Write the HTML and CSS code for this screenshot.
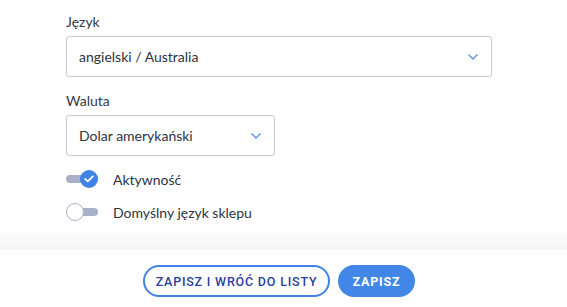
FILE: index.html
```html
<!DOCTYPE html>
<html lang="pl">
<head>
<meta charset="utf-8">
<link rel="stylesheet" href="styles.css">
</head>
<body>
<div class="content">
  <div class="field">
    <label class="label">Język</label>
    <div class="select wide">
      <span>angielski / Australia</span>
      <svg class="chev" width="12" height="8" viewBox="0 0 12 8"><path d="M1.5 1.5 L6 6 L10.5 1.5" fill="none" stroke="#5b8fe8" stroke-width="1.3"/></svg>
    </div>
  </div>
  <div class="field">
    <label class="label">Waluta</label>
    <div class="select narrow">
      <span>Dolar amerykański</span>
      <svg class="chev" width="12" height="8" viewBox="0 0 12 8"><path d="M1.5 1.5 L6 6 L10.5 1.5" fill="none" stroke="#5b8fe8" stroke-width="1.3"/></svg>
    </div>
  </div>
  <div class="toggles">
    <div class="toggle-row">
      <span class="toggle on"><span class="track"></span><span class="knob"><svg width="10" height="8" viewBox="0 0 10 8"><path d="M1.2 4 L3.8 6.4 L8.8 1.4" fill="none" stroke="#fff" stroke-width="1.8" stroke-linecap="round" stroke-linejoin="round"/></svg></span></span>
      <span class="toggle-text">Aktywność</span>
    </div>
    <div class="toggle-row">
      <span class="toggle off"><span class="track"></span><span class="knob"></span></span>
      <span class="toggle-text">Domyślny język sklepu</span>
    </div>
  </div>
</div>
<div class="fade"></div>
<div class="footer">
  <button class="btn outline">ZAPISZ I WRÓĆ DO LISTY</button>
  <button class="btn solid">ZAPISZ</button>
</div>
</body>
</html>
```
FILE: styles.css
```css
html, body {
  margin: 0;
  padding: 0;
  background: #fff;
  width: 567px;
  height: 307px;
  overflow: hidden;
  font-family: "Lato", "Open Sans", sans-serif;
  color: #2d3340;
}
.content {
  padding: 13px 0 0 66px;
  height: 226px;
  box-sizing: border-box;
}
.field {
  display: flex;
  flex-direction: column;
  margin-bottom: 15px;
}
.label {
  font-size: 14px;
  line-height: 18px;
  margin-bottom: 5px;
  color: #333a48;
}
.select {
  box-sizing: border-box;
  height: 41px;
  border: 1px solid #c5cad8;
  border-radius: 3px;
  display: flex;
  align-items: center;
  justify-content: space-between;
  padding: 0 12px 0 12px;
  font-size: 14px;
  color: #2d3340;
}
.select.wide { width: 426px; }
.select.narrow { width: 209px; }
.chev { margin-top: 1px; }
.toggles {
  display: flex;
  flex-direction: column;
  gap: 15px;
  margin-top: -1px;
}
.toggle-row {
  display: flex;
  align-items: center;
  height: 18px;
}
.toggle {
  position: relative;
  width: 32px;
  height: 18px;
  margin-right: 15px;
  flex: none;
}
.track {
  position: absolute;
  left: 0;
  right: 0;
  top: 5px;
  height: 8px;
  border-radius: 4px;
  background: #a9b1c9;
}
.toggle.off .track { left: 8px; }
.knob {
  position: absolute;
  top: 0;
  width: 18px;
  height: 18px;
  border-radius: 50%;
  box-sizing: border-box;
  display: flex;
  align-items: center;
  justify-content: center;
}
.toggle.on .knob { left: 14px; background: #3f83e6; }
.toggle.off .knob { left: 0; background: #fff; border: 1px solid #a9b1c9; }
.toggle-text {
  font-size: 14px;
  color: #2d3340;
}
.fade {
  height: 24px;
  background: linear-gradient(#ffffff, #f5f5f6);
}
.footer {
  display: flex;
  justify-content: center;
  gap: 8px;
  padding-top: 15px;
  padding-right: 9px;
}
.btn {
  height: 32px;
  border-radius: 16px;
  font-family: "Roboto", sans-serif;
  font-weight: 700;
  font-size: 12.5px;
  letter-spacing: 0.8px;
  box-sizing: border-box;
  padding: 0;
  white-space: nowrap;
  cursor: pointer;
}
.btn.outline {
  width: 187px;
  background: #fff;
  border: 2px solid #3f83e6;
  color: #2a3f9e;
  font-weight: 500;
}
.btn.solid {
  width: 77px;
  background: #4286e8;
  border: none;
  color: #fff;
}
```
